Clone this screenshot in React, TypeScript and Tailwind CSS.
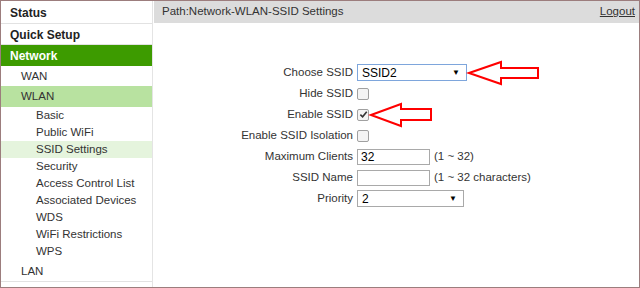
import React from "react";

const subItems = [
  "Basic",
  "Public WiFi",
  "SSID Settings",
  "Security",
  "Access Control List",
  "Associated Devices",
  "WDS",
  "WiFi Restrictions",
  "WPS",
];

const Checkbox = ({ checked }: { checked?: boolean }) => (
  <span className="relative inline-flex h-[12px] w-[12px] items-center justify-center rounded-[2px] border border-[#a0a0a0] bg-[#f4f4f4]">
    {checked && (
      <svg viewBox="0 0 10 10" className="h-[9px] w-[9px]">
        <path d="M1.5 5.2 L4 7.6 L8.6 2" fill="none" stroke="#333" strokeWidth="1.8" />
      </svg>
    )}
  </span>
);

const FakeSelect = ({ value, width, blue }: { value: string; width: string; blue?: boolean }) => (
  <div
    className={`flex h-[17px] items-center justify-between border pl-[4px] pr-[6px] text-[12px] text-black ${width} ${
      blue ? "border-[#7ea6dc]" : "border-[#a9a9a9]"
    }`}
  >
    <span>{value}</span>
    <span className="text-[8px] leading-none">▼</span>
  </div>
);

const Row = ({ label, children }: { label: string; children: React.ReactNode }) => (
  <div className="flex h-[21px] items-center">
    <div className="w-[203px] pr-[4px] text-right">{label}</div>
    <div className="flex items-center gap-[4px]">{children}</div>
  </div>
);

export default function App() {
  return (
    <div
      className="relative flex h-[288px] w-[640px] overflow-hidden border border-[#9c7d7d] bg-white text-[11.5px] text-[#333]"
      style={{ fontFamily: '"Liberation Sans", Arial, sans-serif' }}
    >
      {/* sidebar */}
      <div className="flex w-[151px] flex-col">
        <div className="flex h-[23px] items-center border-b border-[#e2e2e2] pl-[9px] pt-[2px] text-[12px] font-bold text-[#222]">Status</div>
        <div className="flex h-[21px] items-center border-b border-[#e2e2e2] pl-[9px] pt-[2px] text-[12px] font-bold text-[#222]">Quick Setup</div>
        <div className="flex h-[21px] items-center bg-[#3d9b00] pl-[9px] pt-[1px] text-[12px] font-bold text-white">Network</div>
        <div className="flex h-[20px] items-center pl-[20px] pt-[2px]">WAN</div>
        <div className="flex h-[21px] items-center bg-[#b8e2a0] pl-[20px] pt-[1px]">WLAN</div>
        {subItems.map((s) => (
          <div
            key={s}
            className={`flex h-[17px] items-center pl-[35px] pt-[1px] ${s === "SSID Settings" ? "bg-[#e5f4dd]" : ""}`}
          >
            {s}
          </div>
        ))}
        <div className="flex h-[22px] items-center border-b border-[#e2e2e2] pl-[20px] pt-[2px]">LAN</div>
      </div>
      <div className="w-[2px] border-l border-[#e4e4e4]" />

      {/* main */}
      <div className="flex flex-1 flex-col">
        <div className="flex h-[22px] items-center justify-between bg-[#dcdcdc] pl-[8px] pr-[4px]">
          <span>Path:Network-WLAN-SSID Settings</span>
          <span className="underline">Logout</span>
        </div>
        <div className="flex flex-col pt-[39px]">
          <Row label="Choose SSID">
            <FakeSelect value="SSID2" width="w-[110px]" blue />
          </Row>
          <Row label="Hide SSID">
            <Checkbox />
          </Row>
          <Row label="Enable SSID">
            <Checkbox checked />
          </Row>
          <Row label="Enable SSID Isolation">
            <Checkbox />
          </Row>
          <Row label="Maximum Clients">
            <div className="flex h-[16px] w-[73px] items-center border border-[#a9a9a9] pl-[3px] text-[12px] text-black">32</div>
            <span>(1 ~ 32)</span>
          </Row>
          <Row label="SSID Name">
            <div className="h-[16px] w-[73px] border border-[#a9a9a9]" />
            <span>(1 ~ 32 characters)</span>
          </Row>
          <Row label="Priority">
            <FakeSelect value="2" width="w-[107px]" />
          </Row>
        </div>
      </div>

      {/* annotation arrows */}
      <svg className="pointer-events-none absolute left-0 top-0" width="640" height="288">
        <polygon
          points="468,72 500,61 500,67 537,67 537,77 500,77 500,83"
          fill="none"
          stroke="#ff0000"
          strokeWidth="2"
        />
        <polygon
          points="370,114 400,103 400,108 430,108 430,119 400,119 400,125"
          fill="none"
          stroke="#ff0000"
          strokeWidth="2"
        />
      </svg>
    </div>
  );
}
